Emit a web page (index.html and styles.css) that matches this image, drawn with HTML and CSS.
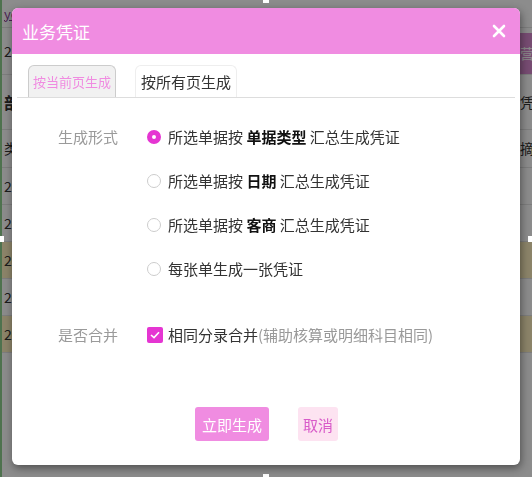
FILE: index.html
```html
<!DOCTYPE html>
<html>
<head>
  <title>业务凭证</title>
<link rel="stylesheet" href="styles.css">
</head>
<body>
  <div class="page">
    <div class="row row-top"><span class="cell-l"><a href="#">ye</a></span><span class="cell-r"></span></div>
    <div class="row row-a"><span class="cell-l">2</span><span class="cell-r"><span class="cell-head">营</span></span></div>
    <div class="row row-b"><span class="cell-l strong">部</span><span class="cell-r">凭</span></div>
    <div class="row row-c"><span class="cell-l">类</span><span class="cell-r">摘</span></div>
    <div class="row"><span class="cell-l">20</span><span class="cell-r"></span></div>
    <div class="row"><span class="cell-l">20</span><span class="cell-r"></span></div>
    <div class="row tan"><span class="cell-l">20</span><span class="cell-r"></span></div>
    <div class="row"><span class="cell-l">20</span><span class="cell-r"></span></div>
    <div class="row tan"><span class="cell-l">20</span><span class="cell-r"></span></div>
  </div>

  <div class="mask"></div>
  <span class="handle handle-top"></span>
  <span class="handle handle-left"></span>
  <span class="handle handle-right"></span>
  <span class="handle handle-bottom"></span>

  <div class="dialog">
    <div class="dialog-header">
      <span class="dialog-title">业务凭证</span>
      <span class="dialog-close">
        <svg width="14" height="14" viewBox="0 0 14 14"><path d="M2 2L12 12M12 2L2 12" stroke="#fff" stroke-width="2.6" stroke-linecap="round"/></svg>
      </span>
    </div>

    <div class="tabs">
      <span class="tab tab-active">按当前页生成</span>
      <span class="tab">按所有页生成</span>
    </div>

    <div class="form">
      <div class="form-row">
        <span class="form-label">生成形式</span>
        <div class="options">
          <label class="option"><span class="radio radio-on"></span>所选单据按 <b>单据类型</b> 汇总生成凭证</label>
          <label class="option"><span class="radio"></span>所选单据按 <b>日期</b> 汇总生成凭证</label>
          <label class="option"><span class="radio"></span>所选单据按 <b>客商</b> 汇总生成凭证</label>
          <label class="option"><span class="radio"></span>每张单生成一张凭证</label>
        </div>
      </div>
      <div class="form-row merge-row">
        <span class="form-label">是否合并</span>
        <label class="option">
          <span class="checkbox">
            <svg width="10" height="8" viewBox="0 0 10 8"><path d="M1 4L4 6.6L9 1.2" fill="none" stroke="#fff" stroke-width="1.6"/></svg>
          </span>相同分录合并<span class="hint">(辅助核算或明细科目相同)</span>
        </label>
      </div>
    </div>

    <div class="buttons">
      <button class="btn btn-primary">立即生成</button>
      <button class="btn btn-cancel">取消</button>
    </div>
  </div>
</body>
</html>
```

FILE: styles.css
```css
body {
  margin: 0;
  width: 532px;
  height: 477px;
  overflow: hidden;
  font-family: "Noto Sans CJK SC", "Microsoft YaHei", sans-serif;
  color: #333;
  background: #fff;
}

/* page behind the mask */
.page {
  border-left: 2px solid #8fd08f;
  height: 477px;
}

.row {
  display: flex;
  justify-content: space-between;
  height: 36px;
  border-bottom: 1px solid #e4e4e4;
  font-size: 14px;
  line-height: 36px;
}

.row.tan {
  background: #fff1bf;
}

.row-top {
  height: 27px;
  line-height: 27px;
  font-size: 13px;
}

.row-top a {
  color: #8a3f9a;
}

.row-a {
  height: 46px;
  line-height: 46px;
}

.row-b {
  height: 54px;
  line-height: 54px;
}

.row-c {
  height: 37px;
  line-height: 37px;
}

.cell-l {
  width: 10px;
  padding-left: 2px;
  white-space: nowrap;
  overflow: hidden;
}

.cell-l.strong {
  font-weight: bold;
  font-size: 16px;
}

.cell-r {
  width: 12px;
  white-space: nowrap;
  overflow: hidden;
  display: flex;
  flex-direction: column;
  justify-content: center;
}

.row-a .cell-r {
  justify-content: flex-end;
}

.cell-head {
  display: block;
  height: 41px;
  line-height: 41px;
  background: #d98ad0;
  color: #fff;
}

.mask {
  position: fixed;
  inset: 0;
  background: rgba(0, 0, 0, 0.45);
}

.handle {
  position: fixed;
  width: 6px;
  height: 6px;
  background: #fff;
}

.handle-top { left: 263px; top: -3px; }
.handle-bottom { left: 263px; bottom: -3px; }
.handle-left { left: -2px; top: 236px; }
.handle-right { right: -2px; top: 236px; }

/* dialog */
.dialog {
  position: fixed;
  left: 12px;
  top: 8px;
  width: 508px;
  height: 457px;
  background: #fff;
  border-radius: 6px;
  overflow: hidden;
  box-shadow: 1px 3px 8px rgba(0, 0, 0, 0.45);
  display: flex;
  flex-direction: column;
}

.dialog-header {
  height: 46px;
  background: #f08ce1;
  display: flex;
  align-items: center;
  justify-content: space-between;
  padding: 0 14px 0 10px;
  flex-shrink: 0;
}

.dialog-title {
  color: #fff;
  font-size: 17px;
}

.dialog-close {
  display: flex;
  margin-top: -1px;
}

.tabs {
  display: flex;
  align-items: flex-end;
  gap: 19px;
  margin: 11px 5px 0 5px;
  padding-left: 11px;
  border-bottom: 1px solid #ddd;
}

.tab {
  height: 31px;
  padding: 0 5px;
  font-size: 15px;
  line-height: 31px;
  color: #333;
  border: 1px solid #eee;
  border-bottom: none;
  border-radius: 6px 6px 0 0;
  background: #fff;
}

.tab-active {
  padding: 0 4px;
  font-size: 13px;
  background: #f1f1f1;
  border-color: #ccc;
  color: #f08ce1;
}

.form {
  padding: 28px 0 0 46px;
  font-size: 15px;
}

.form-row {
  display: flex;
  gap: 29px;
}

.form-label {
  color: #9a9a9a;
  line-height: 22px;
}

.options {
  display: flex;
  flex-direction: column;
  gap: 22px;
}

.option {
  display: flex;
  align-items: center;
  line-height: 22px;
  white-space: pre;
  color: #333;
}

.option b {
  color: #111;
}

.radio {
  width: 12px;
  height: 12px;
  border: 1px solid #ccc;
  border-radius: 50%;
  margin-right: 7px;
  box-sizing: content-box;
}

.radio-on {
  width: 4px;
  height: 4px;
  border: 5px solid #e535d2;
}

.merge-row {
  margin-top: 44px;
}

.checkbox {
  width: 16px;
  height: 16px;
  background: #e535d2;
  border-radius: 2px;
  margin-right: 5px;
  display: flex;
  align-items: center;
  justify-content: center;
}

.hint {
  color: #999;
}

.buttons {
  display: flex;
  justify-content: center;
  gap: 29px;
  margin-top: auto;
  margin-bottom: 24px;
  padding-left: 1px;
}

.btn {
  height: 34px;
  padding: 0 7px;
  border: none;
  border-radius: 3px;
  font-family: inherit;
  font-size: 15px;
  cursor: pointer;
}

.btn-primary {
  background: #f08ce1;
  color: #fff;
}

.btn-cancel {
  background: #fde3f1;
  color: #d85bc9;
  padding: 0 5px;
}
```
